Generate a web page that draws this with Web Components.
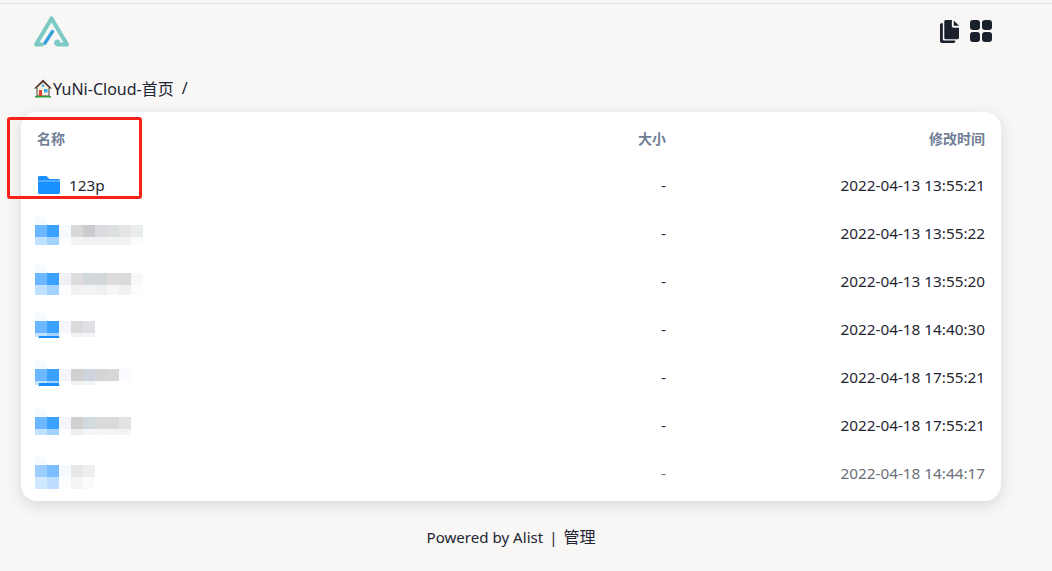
<!DOCTYPE html>
<html lang="zh">
<head>
<meta charset="utf-8">
<title>YuNi-Cloud</title>
<style>
  html, body { margin: 0; height: 100%; overflow: hidden; }
  body {
    background: #f8f7f6;
    color: #1f2532;
    font-family: "Noto Sans", "Noto Sans CJK SC", sans-serif;
    font-size: 15.3px;
  }
</style>
</head>
<body>
<template id="app-shell-tpl">
  <style>
    :host { display: block; position: relative; height: 568px; border-top: 1px solid #dedede; margin-top: 3px; box-sizing: border-box; padding: 0 51px 0 21px; }
    .callout { position: absolute; left: 7px; top: 113px; width: 129px; height: 76px; border: 3px solid #f5211a; border-radius: 3px; }
  </style>
  <slot></slot>
  <div class="callout"></div>
</template>

<template id="top-bar-tpl">
  <style>
    :host { display: flex; justify-content: space-between; align-items: center; height: 56px; padding: 0 9px 0 12px; }
    .logo { display: block; margin-top: -1px; }
    .actions { display: flex; gap: 11px; align-items: center; margin-top: -2px; }
    svg { display: block; }
  </style>
  <svg class="logo" width="37" height="33" viewBox="0 0 37 33">
    <path d="M18.500 3.500 L34 29.500 H24.500 C22.500 29.500 22.500 26.500 25 26.500" fill="none" stroke="#7cc9c5" stroke-width="4" stroke-linecap="round" stroke-linejoin="round"/>
    <path d="M18.500 3.500 L3 29.500 H9" fill="none" stroke="#7cc9c5" stroke-width="4" stroke-linecap="round" stroke-linejoin="round"/>
    <path d="M12 28 L19.500 16.500" fill="none" stroke="#3aa0dc" stroke-width="3.400" stroke-linecap="round"/>
  </svg>
  <div class="actions">
    <svg width="19" height="23" viewBox="0 0 20 24" preserveAspectRatio="none" fill="#1a202c">
      <path d="M3 3.500H1.500C.7 3.500 0 4.200 0 5v17c0 1.100.9 2 2 2h12.500c.8 0 1.500-.7 1.500-1.500V21.500H4.500C3.700 21.500 3 20.800 3 20z"/>
      <path d="M6 0h6.500v6.500c0 .8.700 1.500 1.500 1.500h6V18.500c0 .8-.7 1.500-1.500 1.500H6c-.8 0-1.500-.7-1.500-1.500V1.500C4.500.7 5.200 0 6 0z"/>
      <path d="M14.500 .5 L20 6 H14.500z"/>
    </svg>
    <svg width="22" height="22" viewBox="0 0 22 22" fill="#1a202c">
      <rect x="0" y="0" width="10" height="10" rx="3"/><rect x="12" y="0" width="10" height="10" rx="3"/>
      <rect x="0" y="12" width="10" height="10" rx="3"/><rect x="12" y="12" width="10" height="10" rx="3"/>
    </svg>
  </div>
</template>

<template id="bread-crumb-tpl">
  <style>
    :host { display: flex; align-items: center; height: 24px; padding: 0 0 0 12px; margin: 16px 0 12px; font-size: 16px; }
    svg { display: block; flex: none; }
    .sep { margin-left: 8px; }
  </style>
  <svg width="20" height="20" viewBox="0 0 20 20">
    <path d="M4 9h12v9H4z" fill="#f7efe2" stroke="#4a4038" stroke-width="1"/>
    <path d="M10 1.500 L19 10.500 H16.500 L10 4.500 L3.500 10.500 H1z" fill="#5a3a30"/>
    <path d="M10 4.500 L16 10 H4z" fill="#fbf3e6"/>
    <rect x="6" y="12" width="3" height="6" fill="#d9432f"/>
    <rect x="11" y="11" width="3.500" height="3.500" fill="#3fa9f0"/>
    <rect x="8.800" y="6.500" width="2.400" height="2.400" fill="#3fa9f0"/>
    <path d="M2 18h16v1.500H2z" fill="#2f9a3c"/>
  </svg>
  <span>YuNi-Cloud-首页</span><span class="sep">/</span>
</template>

<template id="file-table-tpl">
  <style>
    :host { display: block; background: #fff; border-radius: 16px; box-shadow: 0 4px 16px rgba(0,0,0,.13); padding-bottom: 4px; }
    .head { display: grid; grid-template-columns: 1fr 120px 319px; align-items: center; box-sizing: border-box; height: 49px; padding: 2px 16px 0; font-size: 14px; font-weight: 700; color: #718096; }
    .head span:not(:first-child) { text-align: right; }
  </style>
  <div class="head"><span>名称</span><span>大小</span><span>修改时间</span></div>
  <slot></slot>
</template>

<template id="file-row-tpl">
  <style>
    :host { display: grid; grid-template-columns: 1fr 120px 319px; align-items: center; height: 48px; padding: 0 16px; position: relative; }
    .name { display: flex; align-items: center; gap: 8px; }
    .size, .time { text-align: right; }
    svg { display: block; }
    :host([dim]) { color: #6b7079; }
  </style>
  <div class="name">
    <svg width="24" height="24" viewBox="0 0 24 24"><path d="M1 4.500C1 3.700 1.700 3 2.500 3h7l2.800 3H21.500c.8 0 1.500.7 1.500 1.500v12c0 .8-.7 1.500-1.500 1.500h-19C1.700 21 1 20.300 1 19.500z" fill="#1890ff"/><path d="M1 8h22" stroke="#a8d4ff" stroke-width=".8"/></svg>
    <span><slot name="name"></slot></span>
  </div>
  <div class="size">-</div>
  <div class="time"><slot name="time"></slot></div>
  <slot name="mask"></slot>
</template>

<template id="blur-mask-tpl">
  <style>
    :host { display: block; position: absolute; left: 14px; top: 0; }
    .tile { position: absolute; }
    .stray { position: absolute; left: 4px; width: 20px; height: 2px; background: #1890ff; }
  </style>
  <div id="tiles"></div>
</template>

<template id="page-foot-tpl">
  <style>
    :host { display: block; text-align: center; margin-top: 23px; font-size: 16px; }
    .en { font-size: 15.100px; }
    .bar { margin: 0 6px; font-size: 15px; }
  </style>
  <span class="en">Powered by Alist</span><span class="bar">|</span><span>管理</span>
</template>

<app-shell>
  <top-bar></top-bar>
  <bread-crumb></bread-crumb>
  <file-table>
    <file-row><span slot="name">123p</span><span slot="time">2022-04-13 13:55:21</span></file-row>
    <file-row><span slot="time">2022-04-13 13:55:22</span>
      <blur-mask slot="mask" data-top="16" data-h1="12" data-h2="8" data-a="#6cb7ff,#3ba1ff,#f6faff,#d6d9d8,#c9cbce,#dcdbe0,#dce0e1,#e6e5e3,#e9edee" data-b="#bfe0ff,#a3d2ff,#fbfdff,#f2f3f3,#f0f1f2,#f1f1f3,#f1f2f2,#f2f2f1,#f9fbfc"></blur-mask></file-row>
    <file-row><span slot="time">2022-04-13 13:55:20</span>
      <blur-mask slot="mask" data-top="16" data-h1="12" data-h2="10" data-a="#6cb7ff,#3ba1ff,#f0f1f4,#dedcdc,#d3d8dc,#d2d8d9,#dddcdb,#dadadc,#f6f8fa" data-b="#bfe0ff,#a3d2ff,#fbfdff,#f4f1f1,#f1f3f4,#eff0f2,#f7f7f7,#f1f1f1,#fbfdfd"></blur-mask></file-row>
    <file-row><span slot="time">2022-04-18 14:40:30</span>
      <blur-mask slot="mask" data-top="16" data-h1="12" data-h2="4" data-line="31" data-a="#6cb7ff,#3ba1ff,#f4f6fb,#dadadc,#e0dfe4" data-b="#bfe0ff,#a3d2ff,#fbfdff,#f2f2f2,#f4f3f5"></blur-mask></file-row>
    <file-row><span slot="time">2022-04-18 17:55:21</span>
      <blur-mask slot="mask" data-top="16" data-h1="12" data-h2="4" data-line="30" data-a="#6cb7ff,#3ba1ff,#f3f5fa,#d2cfd1,#d0d4df,#d5d5d8,#d7d6d8,#fafbfe" data-b="#bfe0ff,#a3d2ff,#fbfdff,#f3f2f2,#f3f4f6,#fff,#fff,#fff"></blur-mask></file-row>
    <file-row><span slot="time">2022-04-18 17:55:21</span>
      <blur-mask slot="mask" data-top="16" data-h1="12" data-h2="6" data-a="#6cb7ff,#3ba1ff,#f3f5fa,#d2cfd1,#d1dade,#dcd9dc,#dadadc,#e3e3e3" data-b="#bfe0ff,#a3d2ff,#fbfdff,#efeeee,#f3f5f7,#f6f6f7,#f5f5f6,#f3f3f3"></blur-mask></file-row>
    <file-row dim><span slot="time">2022-04-18 14:44:17</span>
      <blur-mask slot="mask" data-top="16" data-h1="12" data-h2="12" data-a="#9dceff,#7cbdff,#f5faff,#e6e7e8,#eeeeee" data-b="#d0e8ff,#bddeff,#fbfdff,#f4f4f4,#fbfbfb"></blur-mask></file-row>
  </file-table>
  <page-foot></page-foot>
</app-shell>

<script>
  function simple(tag, tplId) {
    customElements.define(tag, class extends HTMLElement {
      constructor() {
        super();
        this.attachShadow({ mode: 'open' });
        this.shadowRoot.appendChild(document.getElementById(tplId).content.cloneNode(true));
      }
    });
  }
  simple('app-shell', 'app-shell-tpl');
  simple('top-bar', 'top-bar-tpl');
  simple('bread-crumb', 'bread-crumb-tpl');
  simple('file-table', 'file-table-tpl');
  simple('file-row', 'file-row-tpl');
  simple('page-foot', 'page-foot-tpl');

  // pixelated cover over a row's icon and name
  class BlurMask extends HTMLElement {
    constructor() {
      super();
      this.attachShadow({ mode: 'open' });
      this.shadowRoot.appendChild(document.getElementById('blur-mask-tpl').content.cloneNode(true));
    }
    connectedCallback() {
      const box = this.shadowRoot.querySelector('#tiles');
      const top = +this.dataset.top, h1 = +this.dataset.h1, h2 = +this.dataset.h2;
      const lay = (list, y, h) => list.split(',').forEach((c, i) => {
        const t = document.createElement('div');
        t.className = 'tile';
        t.style.cssText = `left:${i * 12}px;top:${y}px;width:12px;height:${h}px;background:${c}`;
        box.appendChild(t);
      });
      lay('#f5faff', top - 8, 8);
      lay(this.dataset.a, top, h1);
      lay(this.dataset.b, top + h1, h2);
      if (this.dataset.line) {
        const s = document.createElement('div');
        s.className = 'stray';
        s.style.top = this.dataset.line + 'px';
        box.appendChild(s);
      }
    }
  }
  customElements.define('blur-mask', BlurMask);
</script>
</body>
</html>
